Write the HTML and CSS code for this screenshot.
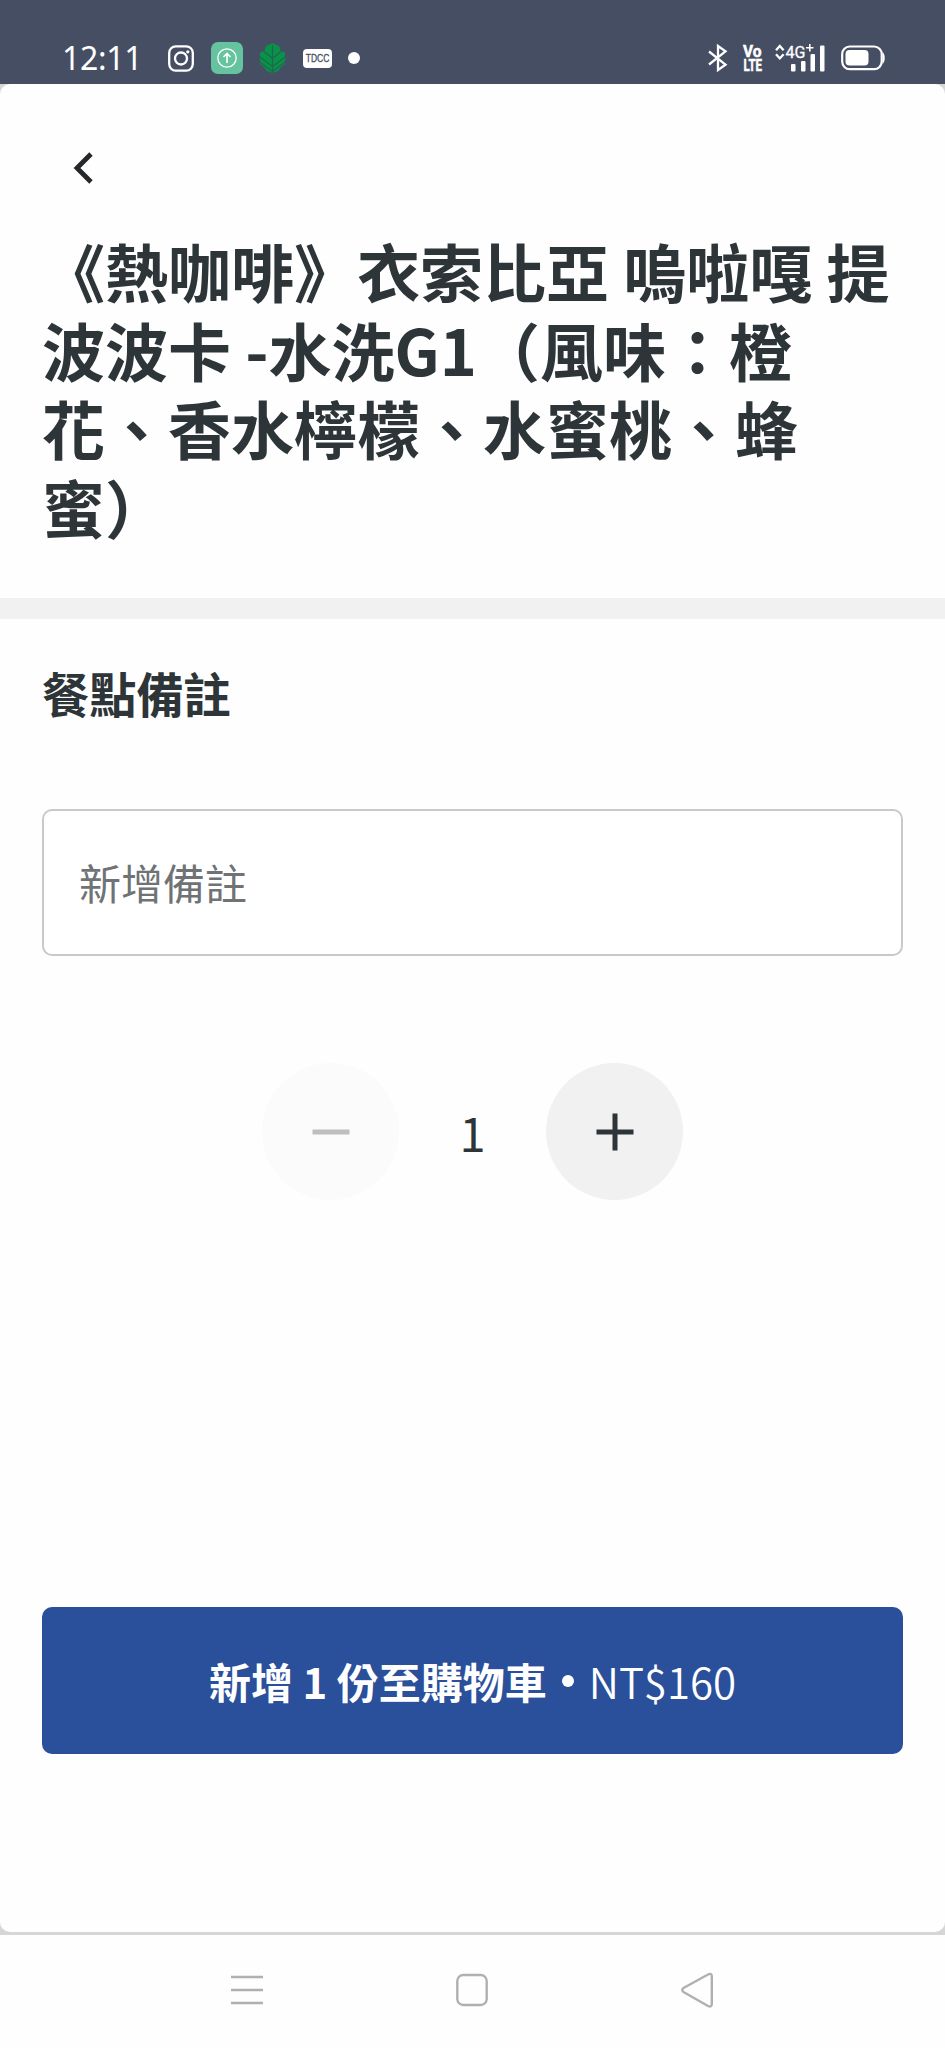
FILE: index.html
```html
<!DOCTYPE html>
<html lang="zh-Hant">
<head>
<meta charset="utf-8">
<title>餐點備註</title>
<link rel="stylesheet" href="styles.css">
</head>
<body>
<div class="screen">
  <header class="status">
    <div class="status-left">
      <span class="clock">12:11</span>
      <svg class="ico-camera" width="26" height="27" viewBox="0 0 26 27" fill="none" stroke="#fff" stroke-width="2.3"><rect x="1.2" y="1.4" width="23.6" height="24.2" rx="6.5"/><circle cx="13" cy="13.5" r="6"/><circle cx="19.8" cy="6.8" r="1.6" fill="#fff" stroke="none"/></svg>
      <svg class="ico-upload" width="32" height="32" viewBox="0 0 32 32" fill="none" stroke="#fff"><rect width="32" height="32" rx="7" fill="#65c3a0" stroke="none"/><circle cx="16" cy="16" r="9.2" stroke-width="1.3"/><path d="M16 21V11.5M12.5 15l3.5-3.6 3.5 3.6" stroke-width="1.6"/></svg>
      <svg class="ico-leaf" width="27" height="30" viewBox="0 0 27 30"><path d="M13.500 0L20.500 3.500 21.500 8 26 9.500V14l.5 2-1.500 3 1 2-5 4-1.500 3-6 2-6-2L6 25l-5-4 1-2-1.500-3 .5-2V9.500L5.500 8l1-4.500z" fill="#08924a"/><path d="M13.500 2v28M5 8.500l8.500 7 8.500-7M1 14l12.500 9.500L26 14M2 20l11.500 8.500L25 20" fill="none" stroke="#23654f" stroke-width="1.200"/></svg>
      <svg class="ico-tdcc" width="29" height="19" viewBox="0 0 29 19"><rect width="29" height="19" rx="4" fill="#fff"/><text x="2.800" y="13" textLength="23.500" lengthAdjust="spacingAndGlyphs" class="tdcc-text">TDCC</text></svg>
      <span class="more-dot"></span>
    </div>
    <div class="status-right">
      <svg class="ico-bt" width="20" height="28" viewBox="0 0 20 28" fill="none" stroke="#fff" stroke-width="2.300"><path d="M1 7.500l16.500 13.200L10 26V2l7.500 5.300L1 20.500"/></svg>
      <svg class="ico-volte" width="20" height="28" viewBox="0 0 20 28" fill="#fff"><text x="0" y="12.500" textLength="18.500" lengthAdjust="spacingAndGlyphs" class="volte-text">Vo</text><text x="0.500" y="26.500" textLength="18.500" lengthAdjust="spacingAndGlyphs" class="volte-text">LTE</text></svg>
      <svg class="ico-signal" width="50" height="28" viewBox="0 0 50 28" fill="#fff"><path d="M1 6.200L4.800 2l3.800 4.200M1 10.200l3.800 4.200 3.800-4.200" fill="none" stroke="#fff" stroke-width="2.300"/><text x="10.500" y="13.800" textLength="20" lengthAdjust="spacingAndGlyphs" class="net-text">4G</text><path d="M31 3.800h7.500M34.800 0v7.500" stroke="#fff" stroke-width="1.600"/><rect x="16" y="20" width="4.500" height="7.500" rx="1"/><rect x="26" y="17" width="4.500" height="10.500" rx="1"/><rect x="35.500" y="10" width="4.500" height="17.500" rx="1"/><rect x="45" y="1.500" width="4.500" height="26" rx="1"/></svg>
      <svg class="ico-battery" width="45" height="26" viewBox="0 0 45 26"><rect x="1.200" y="1.500" width="39.500" height="22.600" rx="7.500" fill="none" stroke="#fff" stroke-width="2.200"/><rect x="4.500" y="5" width="23" height="15.600" rx="4" fill="#fff"/><path d="M41.500 7c3 2 3 10 0 12z" fill="#fff"/></svg>
    </div>
  </header>
  <div class="panel-wrap">
    <main class="panel">
      <button class="back" aria-label="返回"><svg width="20" height="32" viewBox="0 0 20 32" fill="none" stroke="#24282a" stroke-width="4.800"><path d="M18 2L4 16l14 14"/></svg></button>
      <h1 class="title">《熱咖啡》衣索比亞 嗚啦嘎 提<br>波波卡 -水洗G1（風味：橙<br>花、香水檸檬、水蜜桃、蜂<br>蜜）</h1>
      <div class="divider"></div>
      <h2 class="subtitle">餐點備註</h2>
      <div class="note"><span class="note-text">新增備註</span></div>
      <div class="stepper">
        <button class="round round-off" aria-label="減少"><svg width="38" height="38" viewBox="0 0 38 38" stroke="#bdbebe" stroke-width="5"><path d="M0.500 19h37"/></svg></button>
        <span class="count">1</span>
        <button class="round" aria-label="增加"><svg width="38" height="38" viewBox="0 0 38 38" stroke="#2d3538" stroke-width="5"><path d="M0.500 19h37M19 0.500v37"/></svg></button>
      </div>
      <button class="cta"><span class="cta-text"><b>新增 1 份至購物車</b><i class="sep"></i><span class="price">NT$160</span></span></button>
    </main>
  </div>
  <nav class="nav">
    <svg width="32" height="36" viewBox="0 0 32 36" stroke="#b0b0b0" stroke-width="2.600"><path d="M0 5h32M0 18h32M0 31h32"/></svg>
    <svg width="32" height="36" viewBox="0 0 32 36" fill="none" stroke="#b0b0b0" stroke-width="2.400"><rect x="1.300" y="3" width="29.400" height="30" rx="6"/></svg>
    <svg width="32" height="36" viewBox="0 0 32 36" fill="none" stroke="#b0b0b0" stroke-width="2.400" stroke-linejoin="round"><path d="M27 2.500L2.500 16Q0 18 2.500 20L27 34Q30.800 35.500 30.800 32V4.500Q30.800 0.500 27 2.500z"/></svg>
  </nav>
</div>
</body>
</html>
```
FILE: styles.css
```css
* { box-sizing: border-box; }
body { margin: 0; background: #fefefe; color: #2d3538; font-family: "Noto Sans CJK TC", sans-serif; }
button { border: 0; padding: 0; margin: 0; font-family: inherit; color: inherit; background: none; }
svg { display: block; flex: none; overflow: visible; }
.screen { width: 945px; height: 2048px; display: flex; flex-direction: column; overflow: hidden; }

.status { height: 84px; background: #464e64; display: flex; justify-content: space-between; padding: 31px 59px 0 62px; }
.status-left, .status-right { display: flex; align-items: center; height: 54px; }
.clock { font: 400 32px/54px "Noto Sans", sans-serif; color: #fff; width: 106px; letter-spacing: -0.3px; }
.ico-upload { margin-left: 17px; }
.ico-leaf { margin-left: 16px; }
.ico-tdcc { margin-left: 17px; }
.tdcc-text { font: 400 10px "Liberation Sans", sans-serif; fill: #464e64; stroke: #464e64; stroke-width: 0.3px; }
.more-dot { width: 12px; height: 12px; border-radius: 50%; background: #fff; margin-left: 16px; }
.volte-text { font: 700 16px "Roboto", sans-serif; stroke: #fff; stroke-width: 0.5px; }
.net-text { font: 400 17px "Roboto", sans-serif; stroke: #fff; stroke-width: 0.3px; }
.ico-volte { margin-left: 15px; }
.ico-signal { margin-left: 12px; }
.ico-battery { margin-left: 16px; }

.panel-wrap { height: 1851px; background: #d6d6d6; padding-bottom: 3px; flex: none; }
.panel { height: 1848px; background: #fefefe; border-radius: 10px; display: flex; flex-direction: column; align-items: stretch; }
.back { width: 20px; height: 32px; margin: 68px 0 0 73px; }
.title { margin: 47px 42px 0; height: 367px; font-size: 63px; line-height: 78.700px; font-weight: 700; white-space: nowrap; }
.divider { height: 21px; background: #f1f1f1; flex: none; }
.subtitle { margin: 39px 42px 0; font-size: 47.200px; line-height: 70px; font-weight: 700; }
.note { margin: 81px 42px 0; height: 147px; border: 2.500px solid #c9c9c9; border-radius: 10px; padding: 0 0 2px 35px; display: flex; align-items: center; background: #fff; }
.note-text { font-size: 42px; line-height: 60px; color: #6f7375; }
.stepper { display: flex; justify-content: center; align-items: center; margin-top: 107px; }
.round { width: 137px; height: 137px; border-radius: 50%; background: #f1f1f1; display: flex; align-items: center; justify-content: center; }
.round-off { background: #fbfbfb; }
.count { width: 147px; text-align: center; font-size: 47px; line-height: 70px; }
.cta { margin: 407px 42px 0; height: 147px; border-radius: 10px; background: #2a4f9b; color: #fff; display: flex; align-items: center; justify-content: center; font-size: 42px; }
.cta-text { display: flex; align-items: center; line-height: 60px; }
.sep { width: 12px; height: 12px; border-radius: 50%; background: #fff; margin: 0 15px; }
.price { font-weight: 350; }

.nav { flex: 1; display: flex; justify-content: space-between; padding: 37px 232px 0 231px; }
```
